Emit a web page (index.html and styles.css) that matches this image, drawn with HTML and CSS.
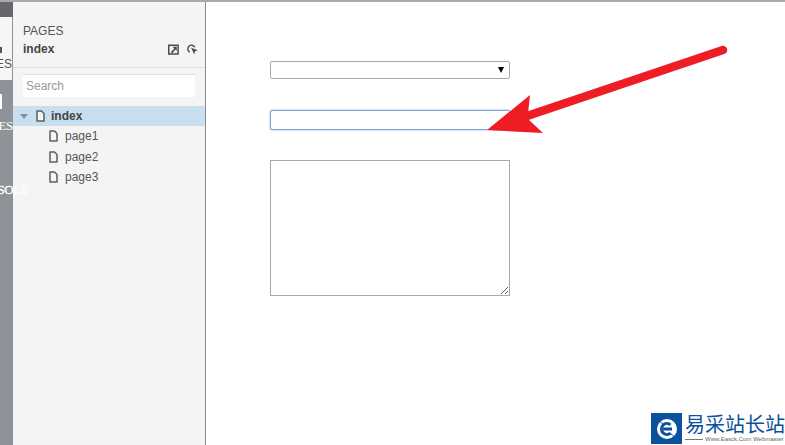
FILE: index.html
```html
<!DOCTYPE html>
<html lang="en">
<head>
<meta charset="utf-8">
<title>Pages</title>
<link rel="stylesheet" href="styles.css">
</head>
<body>
<div class="app">
  <nav class="rail">
    <div class="rail-head"></div>
    <div class="rail-tab active">
      <span class="rail-dot"></span>
      <span class="rail-label">PAGES</span>
    </div>
    <div class="rail-tab second">
      <span class="rail-box"></span>
      <span class="rail-label light">PAGES</span>
    </div>
  </nav>
  <span class="console-label">CONSOLE</span>
  <aside class="sidebar">
    <header class="side-head">
      <div class="side-title">PAGES</div>
      <div class="side-row">
        <span class="side-name">index</span>
        <span class="side-tools">
          <svg class="tool" width="11" height="11" viewBox="0 0 12 12"><path d="M.8 1.300H11V11H.8Z" fill="none" stroke="#4a4a4a" stroke-width="1.600"/><path d="M3 9L6.800 4.800 5 3H9.500V7.500L8 6 4.800 10Z" fill="#4a4a4a"/></svg>
          <svg class="tool" width="12" height="11" viewBox="0 0 13 12"><path d="M9.500 3.500A4 4 0 1 0 4 8.800" fill="none" stroke="#4a4a4a" stroke-width="1.500"/><path d="M5.500 4L12.800 6.800 9.800 8 9 11.500Z" fill="#4a4a4a"/></svg>
        </span>
      </div>
    </header>
    <div class="search-wrap">
      <input class="search" type="text" placeholder="Search">
    </div>
    <ul class="tree">
      <li class="node root">
        <span class="caret"></span>
        <svg class="doc" width="9" height="12" viewBox="0 0 9 12"><path d="M1 1H5.500L8 3.500V11H1Z" fill="#f4f4f4" stroke="#5a5f66" stroke-width="1.500" stroke-linejoin="round"/></svg>
        <span>index</span>
      </li>
      <li class="node child">
        <svg class="doc" width="9" height="12" viewBox="0 0 9 12"><path d="M1 1H5.500L8 3.500V11H1Z" fill="#f4f4f4" stroke="#5a5f66" stroke-width="1.500" stroke-linejoin="round"/></svg>
        <span>page1</span>
      </li>
      <li class="node child">
        <svg class="doc" width="9" height="12" viewBox="0 0 9 12"><path d="M1 1H5.500L8 3.500V11H1Z" fill="#f4f4f4" stroke="#5a5f66" stroke-width="1.500" stroke-linejoin="round"/></svg>
        <span>page2</span>
      </li>
      <li class="node child">
        <svg class="doc" width="9" height="12" viewBox="0 0 9 12"><path d="M1 1H5.500L8 3.500V11H1Z" fill="#f4f4f4" stroke="#5a5f66" stroke-width="1.500" stroke-linejoin="round"/></svg>
        <span>page3</span>
      </li>
    </ul>
  </aside>
  <main class="canvas">
    <form class="fields">
      <div class="select-wrap">
        <select class="field-select"><option></option></select>
      </div>
      <input class="field-input" type="text">
      <textarea class="field-area"></textarea>
    </form>
  </main>
</div>
<svg class="arrow" width="785" height="445" viewBox="0 0 785 445">
  <path d="M723 50L527 116" stroke="#ee1c25" stroke-width="8.500" stroke-linecap="round" fill="none"/>
  <path d="M487 130L530 95 528 114 529 120 543 133Z" fill="#ee1c25"/>
</svg>
<div class="watermark">
  <span class="wm-badge">
    <svg width="24" height="24" viewBox="0 0 24 24"><circle cx="12" cy="12" r="10" fill="#fff"/><path d="M15.500 7.800A5.500 5.500 0 1 0 15.500 16.200M8 12H17" fill="none" stroke="#0b519d" stroke-width="3"/><path d="M5 4.500L9 8M15 16L19 19.500" stroke="#0b519d" stroke-width="1"/></svg>
  </span>
  <span class="wm-text">
    <span class="wm-cn">易采站长站</span>
    <span class="wm-en"><span class="wm-rule"></span><span class="wm-url">Www.Easck.Com Webmaster</span></span>
  </span>
</div>
</body>
</html>
```
FILE: styles.css
```css
* { box-sizing: border-box; }
html, body { margin: 0; height: 100%; overflow: hidden; background: #fff; }
body { font-family: "Liberation Sans", Arial, sans-serif; position: relative; }
.app { display: flex; height: 445px; border-top: 2px solid #a9a9a9; }

.rail { width: 13px; flex: none; background: #8f9299; display: flex; flex-direction: column; overflow: hidden; }
.rail-head { height: 15px; background: #66676d; }
.rail-tab { display: flex; flex-direction: column; align-items: flex-end; }
.rail-tab.active { height: 63px; background: #f6f6f6; border-right: 1px solid #8f9299; padding-top: 30px; }
.rail-tab.second { padding-top: 14px; }
.rail-dot { width: 2px; height: 6px; background: #555; margin-right: 10px; }
.rail-box { width: 2px; height: 15px; background: #fff; margin-right: 11px; }
.rail-label { font-size: 12px; line-height: 14px; color: #555; white-space: nowrap; margin-top: 4px; }
.rail-label.light { color: #fff; margin-top: 10px; font: 13px/14px "Liberation Serif", serif; letter-spacing: -.3px; }
.console-label { position: absolute; right: calc(100% - 28px); top: 182px; font: 13px/15px "Liberation Serif", serif; color: #fff; letter-spacing: -.5px; -webkit-text-stroke: .3px #fff; z-index: 2; }

.sidebar { width: 193px; flex: none; background: #f4f4f4; border-right: 1px solid #8a8a8a; }
.side-head { height: 66px; padding: 22px 7px 0 10px; border-bottom: 1px solid #dcdcdc; }
.side-title { font-size: 12px; line-height: 14px; color: #555; }
.side-row { display: flex; justify-content: space-between; align-items: center; margin-top: 4px; }
.side-name { font-size: 12px; line-height: 14px; font-weight: bold; color: #444; }
.side-tools { display: flex; gap: 7px; }
.search-wrap { padding: 6px 10px 0; }
.search { display: block; width: 172px; height: 23px; border: 0; border-top: 1px solid #e3e3e3; background: #fff; padding: 0 3px; font: 12px "Liberation Sans", sans-serif; color: #555; outline: 0; }
.search::placeholder { color: #9a9a9a; opacity: 1; }
.tree { list-style: none; margin: 9px 0 0; padding: 0; }
.node { display: flex; align-items: center; font-size: 12px; color: #555; }
.root { height: 20px; background: #c8dfef; padding-left: 7px; font-weight: bold; color: #444; }
.child { height: 20.500px; padding-left: 36px; }
.caret { width: 0; height: 0; border: 4px solid transparent; border-top: 5px solid #8a8f96; border-bottom: 0; margin-right: 8px; }
.doc { flex: none; margin-right: 7px; }
.root .doc { margin-right: 6px; }

.canvas { flex: 1; padding: 59px 0 0 64px; }
.fields { display: flex; flex-direction: column; width: 240px; }
.select-wrap { position: relative; height: 18px; margin-bottom: 31px; }
.select-wrap::after { content: ""; position: absolute; right: 6px; top: 6px; border: 3px solid transparent; border-top: 6px solid #000; border-bottom: 0; }
.field-select { appearance: none; display: block; width: 100%; height: 18px; background: #fff; border: 1px solid #a9a9a9; border-radius: 2px; outline: 0; }
.field-input { display: block; width: 100%; height: 20px; margin-bottom: 30px; border: 1px solid #7ea9e4; box-shadow: 0 0 0 .5px #a9c6f0; border-radius: 2px; outline: 0; padding: 0 2px; }
.field-area { display: block; width: 100%; height: 136px; border: 1px solid #a9a9a9; outline: 0; margin: 0; }

.arrow { position: absolute; left: 0; top: 0; z-index: 3; pointer-events: none; }

.watermark { position: absolute; left: 651px; top: 413px; width: 134px; height: 32px; display: flex; background: #fff; z-index: 4; overflow: hidden; }
.wm-badge { width: 31px; height: 31px; flex: none; background: #0b519d; display: flex; align-items: center; justify-content: center; }
.wm-text { display: flex; flex-direction: column; padding-left: 3px; width: 103px; }
.wm-cn { font: 20px/22px "Noto Sans CJK SC", sans-serif; color: #0b519d; white-space: nowrap; }
.wm-en { display: flex; align-items: center; gap: 2px; height: 8px; color: #666; white-space: nowrap; }
.wm-rule { width: 18px; height: 1px; background: #777; flex: none; }
.wm-url { font-size: 6px; line-height: 8px; }
```
